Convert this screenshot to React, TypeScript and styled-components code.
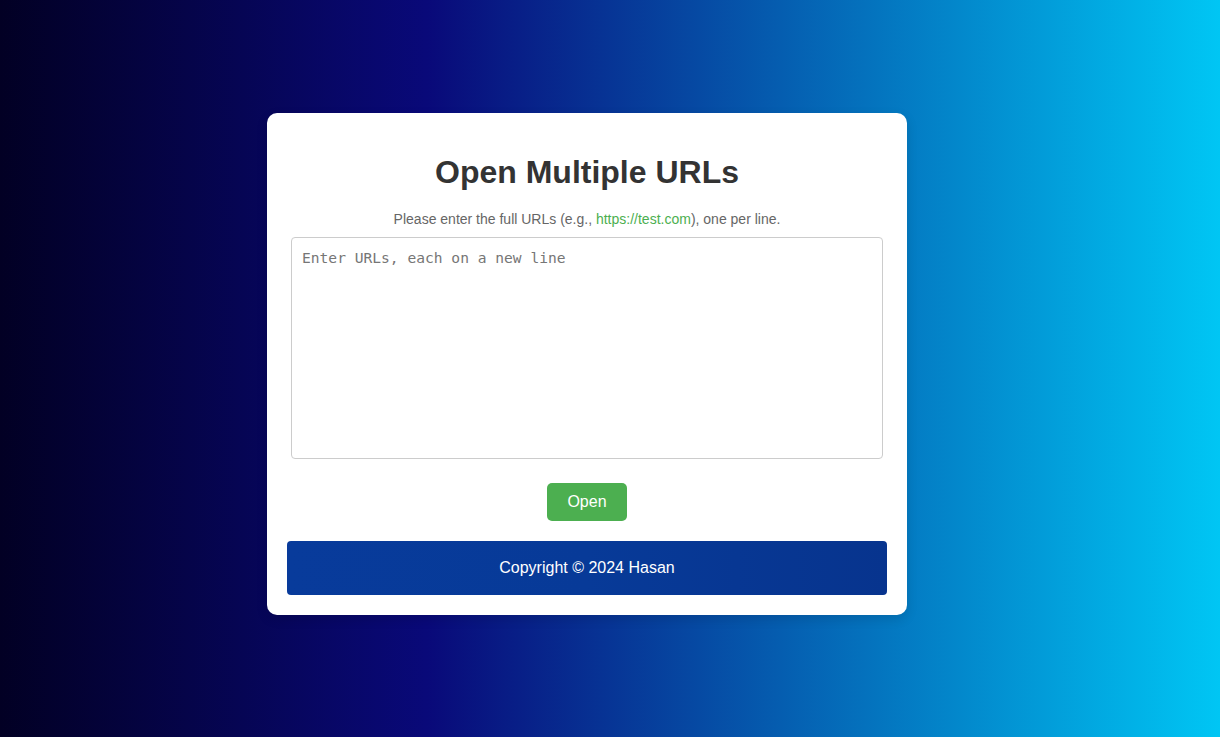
import React from "react";
import styled, { createGlobalStyle } from "styled-components";

const GlobalStyle = createGlobalStyle`
  html, body {
    margin: 0;
    padding: 0;
  }
  body {
    font-family: "Liberation Sans", Arial, sans-serif;
    background: linear-gradient(90deg, #020024 0%, #090979 35%, #00c6f4 100%);
    min-height: 100vh;
  }
`;

const Page = styled.main`
  min-height: 737px;
  display: flex;
  align-items: flex-start;
  justify-content: center;
  padding: 113px 46px 0 0;
  box-sizing: border-box;
`;

const Card = styled.section`
  width: 640px;
  box-sizing: border-box;
  background: #ffffff;
  border-radius: 10px;
  padding: 20px;
  box-shadow: 0 4px 12px rgba(0, 0, 0, 0.12);
  display: flex;
  flex-direction: column;
  align-items: center;
`;

const Title = styled.h1`
  margin: 21px 0 20px;
  font-size: 32px;
  line-height: 37px;
  font-weight: 700;
  color: #333333;
  text-align: center;
`;

const Hint = styled.p`
  margin: 0 0 10px;
  font-size: 14px;
  line-height: 16px;
  color: #666666;
  text-align: center;
`;

const Link = styled.span`
  color: #4caf50;
`;

const UrlInput = styled.textarea`
  display: block;
  width: 592px;
  height: 222px;
  box-sizing: border-box;
  margin: 0;
  padding: 10px;
  border: 1px solid #cccccc;
  border-radius: 4px;
  resize: none;
  font-family: "DejaVu Sans Mono", "Liberation Mono", monospace;
  font-size: 14.6px;
  line-height: 20px;
  color: #333;
  outline: none;
  &::placeholder {
    color: #767676;
  }
`;

const OpenButton = styled.button`
  margin: 24px 0 20px;
  width: 80px;
  height: 38px;
  border: none;
  border-radius: 5px;
  background: #4caf50;
  color: #ffffff;
  font-family: "Liberation Sans", Arial, sans-serif;
  font-size: 16px;
  cursor: pointer;
`;

const Footer = styled.footer`
  align-self: stretch;
  height: 54px;
  border-radius: 4px;
  background: linear-gradient(90deg, #083b9b 0%, #073a98 50%, #07348e 100%);
  color: #ffffff;
  font-size: 16px;
  display: flex;
  align-items: center;
  justify-content: center;
`;

export default function App() {
  return (
    <>
      <GlobalStyle />
      <Page>
        <Card>
          <Title>Open Multiple URLs</Title>
          <Hint>
            Please enter the full URLs (e.g., <Link>https://test.com</Link>), one per line.
          </Hint>
          <UrlInput placeholder="Enter URLs, each on a new line" />
          <OpenButton type="button">Open</OpenButton>
          <Footer>Copyright © 2024 Hasan</Footer>
        </Card>
      </Page>
    </>
  );
}
